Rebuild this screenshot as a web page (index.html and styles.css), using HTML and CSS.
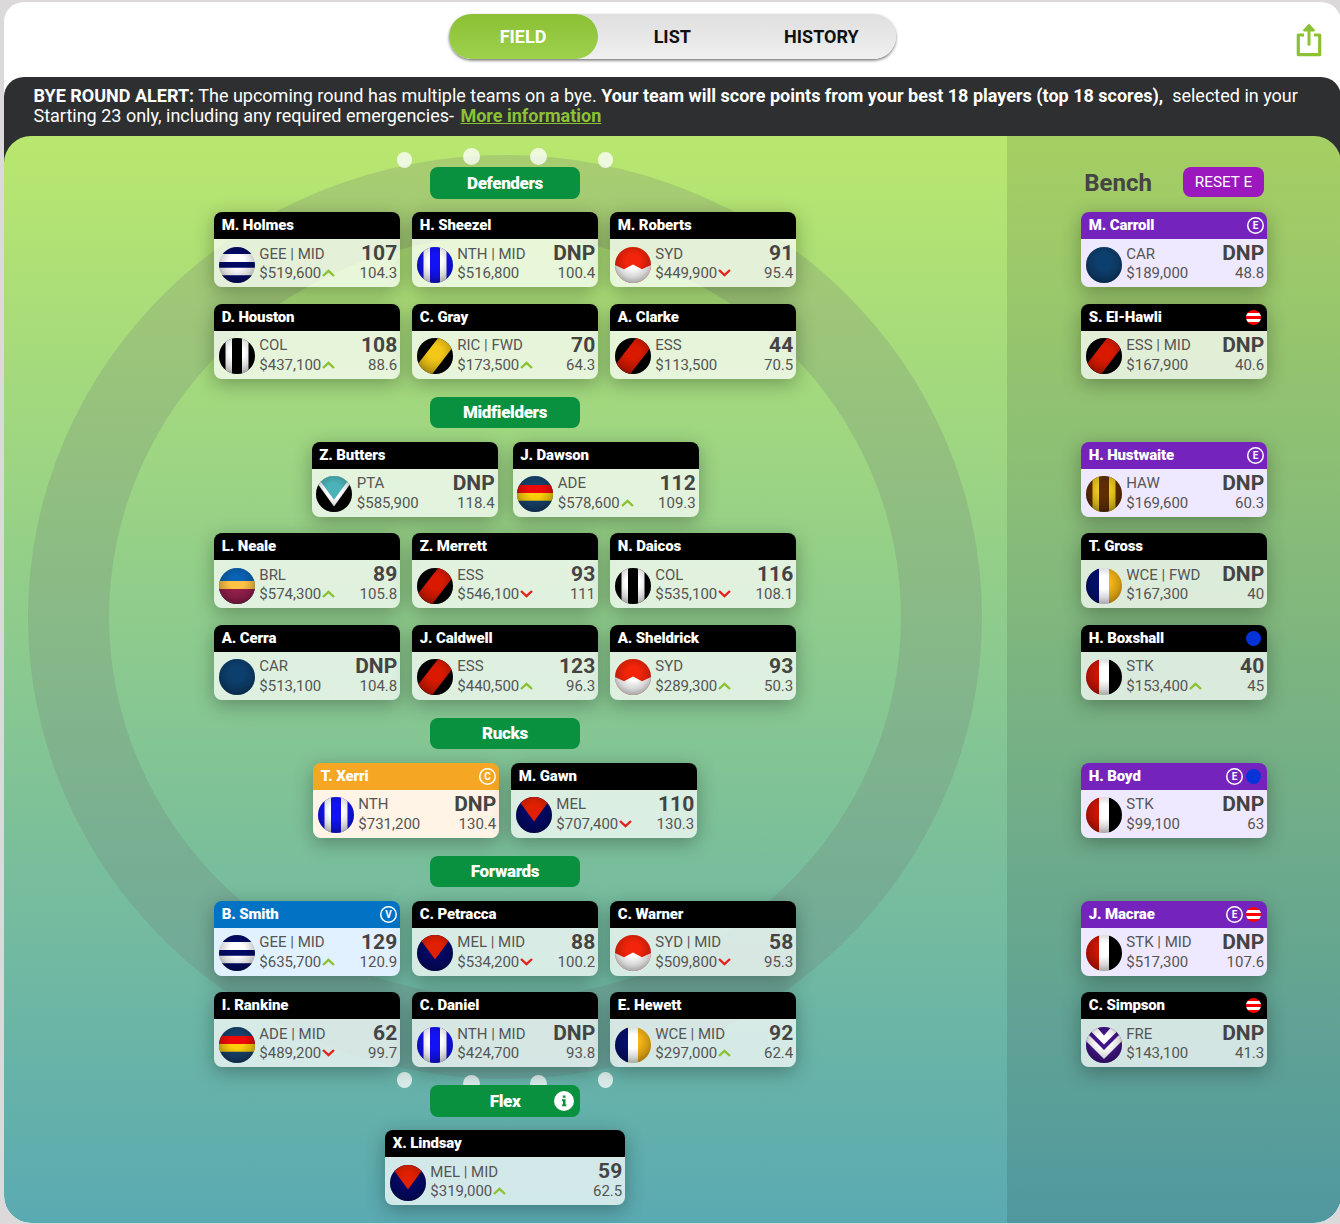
FILE: index.html
```
<!DOCTYPE html>
<html lang="en">
<head>
    <meta charset="UTF-8">
    <meta name="viewport" content="width=device-width, initial-scale=1.0">
    <title>My Team - Field</title>
    <link rel="stylesheet" href="styles.css">
</head>
<body>
    <!-- team balls and small icons -->
    <svg class="sprite" aria-hidden="true">
        <symbol id="team-gee" viewBox="0 0 36 36">
            <rect width="36" height="36" fill="#fff"/>
            <path d="M0 0h36v7H0zM0 15h36v5.7H0zM0 28.3h36V36H0z" fill="#020a66"/>
        </symbol>
        <symbol id="team-nth" viewBox="0 0 36 36">
            <rect width="36" height="36" fill="#1212f5"/>
            <path d="M6.5 0H13v36H6.5zM23 0h6.5v36H23z" fill="#fff"/>
        </symbol>
        <symbol id="team-col" viewBox="0 0 36 36">
            <rect width="36" height="36" fill="#000"/>
            <path d="M6.5 0H13v36H6.5zM23 0h6.5v36H23z" fill="#fff"/>
        </symbol>
        <symbol id="team-haw" viewBox="0 0 36 36">
            <rect width="36" height="36" fill="#5f2d04"/>
            <path d="M6.5 0H13v36H6.5zM23 0h6.5v36H23z" fill="#eac61a"/>
        </symbol>
        <symbol id="team-syd" viewBox="0 0 36 36">
            <rect width="36" height="36" fill="#f2240a"/>
            <path d="M0 18l9 4.2 9-4.7 9 4.7 9-4.2v18H0z" fill="#fff"/>
        </symbol>
        <symbol id="team-ric" viewBox="0 0 36 36">
            <rect width="36" height="36" fill="#000"/>
            <path d="M-2 29.6L23 -2.4 39 5 13 39z" fill="#f3c717"/>
        </symbol>
        <symbol id="team-ess" viewBox="0 0 36 36">
            <rect width="36" height="36" fill="#000"/>
            <path d="M-2 29.6L23 -2.4 39 5 13 39z" fill="#d91a00"/>
        </symbol>
        <symbol id="team-pta" viewBox="0 0 36 36">
            <rect width="36" height="36" fill="#000"/>
            <path d="M-4 0h44L18 30.5z" fill="#fff"/>
            <path d="M0.5 0h35L18 23.8z" fill="#4bb3b8"/>
        </symbol>
        <symbol id="team-ade" viewBox="0 0 36 36">
            <rect width="36" height="36" fill="#17426c"/>
            <path d="M0 9h36v8H0z" fill="#ee0a0a"/>
            <path d="M0 17h36v7.7H0z" fill="#fbcf0a"/>
        </symbol>
        <symbol id="team-brl" viewBox="0 0 36 36">
            <rect width="36" height="36" fill="#0a63b4"/>
            <path d="M0 13h36v8H0z" fill="#ffc243"/>
            <path d="M0 21h36v15H0z" fill="#981f4c"/>
        </symbol>
        <symbol id="team-wce" viewBox="0 0 36 36">
            <rect width="36" height="36" fill="#fff"/>
            <path d="M0 0h13v36H0z" fill="#03106c"/>
            <path d="M23 0h13v36H23z" fill="#f5b416"/>
        </symbol>
        <symbol id="team-stk" viewBox="0 0 36 36">
            <rect width="36" height="36" fill="#fff"/>
            <path d="M0 0h13v36H0z" fill="#cd1505"/>
            <path d="M23 0h13v36H23z" fill="#000"/>
        </symbol>
        <symbol id="team-mel" viewBox="0 0 36 36">
            <rect width="36" height="36" fill="#030866"/>
            <path d="M0 0h36L18 24.5z" fill="#e02000"/>
        </symbol>
        <symbol id="team-car" viewBox="0 0 36 36">
            <rect width="36" height="36" fill="#0d3f6e"/>
        </symbol>
        <symbol id="team-fre" viewBox="0 0 36 36">
            <rect width="36" height="36" fill="#421489"/>
            <path d="M4 3.5L18 17.5 32 3.5 27 -2 18 8.5 9 -2z" fill="#fff"/>
            <path d="M-2 12L18 32 38 12V3L18 23 -2 3z" fill="#fff"/>
        </symbol>
        <symbol id="icon-up" viewBox="0 0 13 8">
            <path d="M1 7l5.5-5.2L12 7" fill="none" stroke="#8bc233" stroke-width="2.4"/>
        </symbol>
        <symbol id="icon-down" viewBox="0 0 13 8">
            <path d="M1 1l5.5 5.2L12 1" fill="none" stroke="#e3231e" stroke-width="2.4"/>
        </symbol>
    </svg>

    <div class="panel">
        <header class="top-bar">
            <nav class="tabs">
                <a class="tab active">FIELD</a>
                <a class="tab">LIST</a>
                <a class="tab">HISTORY</a>
            </nav>
            <svg class="share" viewBox="0 0 26 34">
                <path d="M8 12H2.3v19.7h21.4V12H18" fill="none" stroke="#8bc233" stroke-width="3.2" stroke-linejoin="round"/>
                <path d="M13 22.5V4" stroke="#8bc233" stroke-width="3"/>
                <path d="M6.8 7.2L13 .4l6.2 6.8-1.2 1.2H8z" fill="#8bc233"/>
            </svg>
        </header>

        <div class="alert">
            <b>BYE ROUND ALERT:</b> The upcoming round has multiple teams on a bye. <b>Your team will score points from your best 18 players (top 18 scores),</b>&nbsp; selected in your Starting 23 only, including any required emergencies- <a class="more">More information</a>
        </div>

        <main class="ground">
            <section class="field">
                <div class="circle"></div>
                <div class="goals goals-top"><i></i><i></i><i></i><i></i></div>
                <div class="goals goals-bottom"><i></i><i></i><i></i><i></i></div>
                <div id="fieldLines" class="lines"></div>
            </section>
            <section class="bench">
                <div class="bench-head">
                    <h2>Bench</h2>
                    <button class="reset">RESET E</button>
                </div>
                <div id="benchLines" class="lines"></div>
            </section>
        </main>
    </div>

    <script src="script.js"></script>
</body>
</html>
```
FILE: styles.css
```
* {
    margin: 0;
    padding: 0;
    box-sizing: border-box;
}

body {
    background-color: #dbd9da;
    font-family: Roboto, "Liberation Sans", sans-serif;
    padding: 2px 0 0 4px;
    height: 1224px;
    overflow: hidden;
}

.sprite {
    display: none;
}

.panel {
    width: 1337px;
    height: 1221px;
    background-color: #fff;
    border-radius: 20px 20px 27px 27px;
    overflow: hidden;
}

/* header */
.top-bar {
    height: 75px;
    padding: 12px 19.5px 0 444.5px;
    display: flex;
    justify-content: space-between;
}

.tabs {
    display: flex;
    width: 447.5px;
    height: 45px;
    border-radius: 23px;
    background: linear-gradient(#dfdfdf, #f0f0f0);
    box-shadow: 0 1.5px 3px rgba(0, 0, 0, 0.55);
}

.tab {
    flex: 1;
    line-height: 45px;
    text-align: center;
    font-size: 18px;
    font-weight: bold;
    color: #111;
    border-radius: 23px;
}

.tab.active {
    color: #fff;
    background: linear-gradient(#8bc034, #9dd14c);
}

.share {
    width: 26px;
    height: 34px;
    margin-top: 8.5px;
}

.alert {
    height: 90px;
    margin-bottom: -31px;
    padding: 9px 30px 0 29.5px;
    background-color: #2e2f31;
    border-radius: 20px 20px 0 0;
    color: #fff;
    font-size: 18px;
    line-height: 20px;
}

.more {
    margin-left: 2px;
    color: #8bc233;
    font-weight: bold;
    text-decoration: underline;
}

/* ground */
.ground {
    position: relative;
    display: flex;
    height: 1087px;
    border-radius: 27px;
    overflow: hidden;
    background: linear-gradient(#b9e76e, #5aaab2);
}

.field {
    position: relative;
    width: 1003px;
    padding: 29.5px 1px 0 0;
}

.circle {
    position: absolute;
    left: 24px;
    top: 19px;
    width: 954px;
    height: 924px;
    border: 81px solid rgba(115, 120, 118, 0.22);
    border-radius: 50%;
}

.goals {
    position: absolute;
    left: 392.5px;
    width: 216.5px;
    display: flex;
    justify-content: space-between;
}

.goals-top {
    top: 11.5px;
}

.goals-bottom {
    bottom: 131px;
    align-items: flex-end;
}

.goals i {
    width: 17px;
    height: 17px;
    border-radius: 50%;
    background-color: rgba(255, 255, 255, 0.76);
}

.goals i:first-child, .goals i:last-child {
    width: 15.5px;
    height: 15.5px;
}

.goals-top i:first-child, .goals-top i:last-child {
    margin-top: 4.5px;
}

.goals-bottom i:first-child, .goals-bottom i:last-child {
    margin-bottom: 4.5px;
}

.lines {
    position: relative;
}

.line-head {
    height: 46.5px;
    padding-top: 1.5px;
}

.pill {
    width: 150px;
    height: 31.5px;
    margin: 0 auto;
    display: flex;
    align-items: center;
    justify-content: center;
    position: relative;
    border-radius: 8px;
    background-color: #0a913f;
    color: #fff;
    font-size: 17px;
    font-weight: 900;
    letter-spacing: -0.35px;
}

.info {
    position: absolute;
    right: 6px;
    width: 20px;
    height: 20px;
}

.row {
    display: flex;
    justify-content: center;
    gap: 12px;
    margin-bottom: 16.5px;
}

.row.wide {
    gap: 15px;
}

/* player card */
.card {
    width: 186px;
    height: 75px;
    border-radius: 8px;
    box-shadow: 0 5px 20px rgba(0, 0, 0, 0.3);
}

.card.long {
    width: 240px;
}

.card-head {
    height: 27px;
    display: flex;
    align-items: center;
    gap: 3px;
    padding: 0 3px 0 7.8px;
    border-radius: 8px 8px 0 0;
    background-color: #000;
    color: #fff;
}

.name {
    flex: 1;
    margin-top: -1px;
    font-size: 15px;
    font-weight: 900;
    letter-spacing: -0.15px;
    line-height: 26px;
}

.badge {
    width: 17px;
    height: 17px;
    border-radius: 50%;
    box-shadow: inset 0 0 0 1.5px #fff;
    font-size: 10px;
    font-weight: bold;
    line-height: 17px;
    text-align: center;
}

.dot {
    width: 15px;
    height: 15px;
    margin-right: 3px;
    border-radius: 50%;
}

.dot.blue {
    background-color: #0434d8;
}

.dot.stripe {
    background: linear-gradient(#f00 3px, #fff 3px 6px, #f00 6px 9px, #fff 9px 12px, #f00 12px);
}

.card-body {
    height: 48px;
    display: flex;
    padding: 0 2.8px 0 4.9px;
    border-radius: 0 0 8px 8px;
    background-color: rgba(255, 255, 255, 0.72);
    color: #555;
    font-size: 15px;
    line-height: 19.5px;
}

.card.emergency .card-head {
    background-color: #7424bc;
}

.card.emergency .card-body {
    background-color: #efe9ff;
}

.card.captain .card-head {
    background-color: #f5a623;
}

.card.captain .card-body {
    background-color: #fff4e6;
}

.card.vice .card-head {
    background-color: #0273c4;
}

.card.vice .card-body {
    background-color: #e2f1ff;
}

.ball {
    position: relative;
    width: 36px;
    height: 36px;
    margin: 7.7px 4.4px 0 0;
    border-radius: 50%;
    overflow: hidden;
}

.ball svg {
    display: block;
    width: 36px;
    height: 36px;
}

/* shading that makes the ball look round */
.ball::after {
    content: "";
    position: absolute;
    inset: 0;
    background: radial-gradient(circle at 50% 40%, transparent 25%, rgba(0, 0, 0, 0.16) 55%, rgba(0, 0, 0, 0.42) 85%);
}

.details {
    flex: 1;
    padding-top: 5.5px;
    white-space: nowrap;
}

.arrow {
    width: 13px;
    height: 8px;
    margin-left: 1px;
    vertical-align: 0.7px;
}

.points {
    padding-top: 5px;
    text-align: right;
}

.average {
    padding-top: 0.5px;
}

.score {
    font-size: 21px;
    font-weight: bold;
    color: #444;
}

/* bench */
.bench {
    flex: 1;
    padding: 31px 0 0 74px;
    background-color: rgba(0, 0, 0, 0.1);
}

.bench-head {
    width: 183px;
    height: 45px;
    padding-left: 3.2px;
    display: flex;
    justify-content: space-between;
}

.bench h2 {
    font-size: 24px;
    line-height: 32px;
    color: #444;
}

.bench .row {
    justify-content: flex-start;
}

.reset {
    width: 81px;
    height: 30px;
    padding-bottom: 1px;
    border: 0;
    border-radius: 8px;
    background-color: #9a18bd;
    color: #fff;
    font-family: inherit;
    font-size: 15.3px;
}
```
FILE: script.js
```
// [name, team, position, price, trend, score, average, type, injury dot]
const field = [
    { title: "Defenders", rows: [
        [["M. Holmes", "GEE", "MID", "519,600", "up", "107", "104.3"],
         ["H. Sheezel", "NTH", "MID", "516,800", "", "DNP", "100.4"],
         ["M. Roberts", "SYD", "", "449,900", "down", "91", "95.4"]],
        [["D. Houston", "COL", "", "437,100", "up", "108", "88.6"],
         ["C. Gray", "RIC", "FWD", "173,500", "up", "70", "64.3"],
         ["A. Clarke", "ESS", "", "113,500", "", "44", "70.5"]]
    ] },
    { title: "Midfielders", rows: [
        [["Z. Butters", "PTA", "", "585,900", "", "DNP", "118.4"],
         ["J. Dawson", "ADE", "", "578,600", "up", "112", "109.3"]],
        [["L. Neale", "BRL", "", "574,300", "up", "89", "105.8"],
         ["Z. Merrett", "ESS", "", "546,100", "down", "93", "111"],
         ["N. Daicos", "COL", "", "535,100", "down", "116", "108.1"]],
        [["A. Cerra", "CAR", "", "513,100", "", "DNP", "104.8"],
         ["J. Caldwell", "ESS", "", "440,500", "up", "123", "96.3"],
         ["A. Sheldrick", "SYD", "", "289,300", "up", "93", "50.3"]]
    ] },
    { title: "Rucks", rows: [
        [["T. Xerri", "NTH", "", "731,200", "", "DNP", "130.4", "captain"],
         ["M. Gawn", "MEL", "", "707,400", "down", "110", "130.3"]]
    ] },
    { title: "Forwards", rows: [
        [["B. Smith", "GEE", "MID", "635,700", "up", "129", "120.9", "vice"],
         ["C. Petracca", "MEL", "MID", "534,200", "down", "88", "100.2"],
         ["C. Warner", "SYD", "MID", "509,800", "down", "58", "95.3"]],
        [["I. Rankine", "ADE", "MID", "489,200", "down", "62", "99.7"],
         ["C. Daniel", "NTH", "MID", "424,700", "", "DNP", "93.8"],
         ["E. Hewett", "WCE", "MID", "297,000", "up", "92", "62.4"]]
    ] },
    { title: "Flex", rows: [
        [["X. Lindsay", "MEL", "MID", "319,000", "up", "59", "62.5", "long"]]
    ] }
];

const bench = [
    { rows: [
        [["M. Carroll", "CAR", "", "189,000", "", "DNP", "48.8", "emergency"]],
        [["S. El-Hawli", "ESS", "MID", "167,900", "", "DNP", "40.6", "", "stripe"]]
    ] },
    { rows: [
        [["H. Hustwaite", "HAW", "", "169,600", "", "DNP", "60.3", "emergency"]],
        [["T. Gross", "WCE", "FWD", "167,300", "", "DNP", "40"]],
        [["H. Boxshall", "STK", "", "153,400", "up", "40", "45", "", "blue"]]
    ] },
    { rows: [
        [["H. Boyd", "STK", "", "99,100", "", "DNP", "63", "emergency", "blue"]]
    ] },
    { rows: [
        [["J. Macrae", "STK", "MID", "517,300", "", "DNP", "107.6", "emergency", "stripe"]],
        [["C. Simpson", "FRE", "", "143,100", "", "DNP", "41.3", "", "stripe"]]
    ] }
];

const badges = { captain: "C", vice: "V", emergency: "E" };

const infoIcon = `<svg class="info" viewBox="0 0 20 20">
    <circle cx="10" cy="10" r="10" fill="#fff"/>
    <path d="M8.8 4.6h2.7v2.2H8.8zM8 8.3h3.5v5.2h.9v1.8H8v-1.8h.9v-3.4H8z" fill="#0a913f"/>
</svg>`;

function card([name, team, pos, price, trend, score, avg, type = "", dot = ""]) {
    return `<div class="card ${type}">
        <div class="card-head">
            <span class="name">${name}</span>
            ${badges[type] ? `<span class="badge">${badges[type]}</span>` : ""}
            ${dot ? `<span class="dot ${dot}"></span>` : ""}
        </div>
        <div class="card-body">
            <div class="ball"><svg><use href="#team-${team.toLowerCase()}"/></svg></div>
            <div class="details">
                <p>${team}${pos ? " | " + pos : ""}</p>
                <p>$${price}${trend ? `<svg class="arrow"><use href="#icon-${trend}"/></svg>` : ""}</p>
            </div>
            <div class="points">
                <p class="score">${score}</p>
                <p class="average">${avg}</p>
            </div>
        </div>
    </div>`;
}

function lines(groups) {
    return groups.map((group, i) => {
        let html = "";
        if (group.title) {
            html += `<div class="line-head"><div class="pill">${group.title}${group.title === "Flex" ? infoIcon : ""}</div></div>`;
        } else if (i > 0) {
            html += `<div class="line-head"></div>`; // keeps the bench level with the field
        }
        group.rows.forEach(row => {
            html += `<div class="row ${row.length === 2 && group.title === "Midfielders" ? "wide" : ""}">${row.map(card).join("")}</div>`;
        });
        return html;
    }).join("");
}

document.getElementById("fieldLines").innerHTML = lines(field);
document.getElementById("benchLines").innerHTML = lines(bench);
```
